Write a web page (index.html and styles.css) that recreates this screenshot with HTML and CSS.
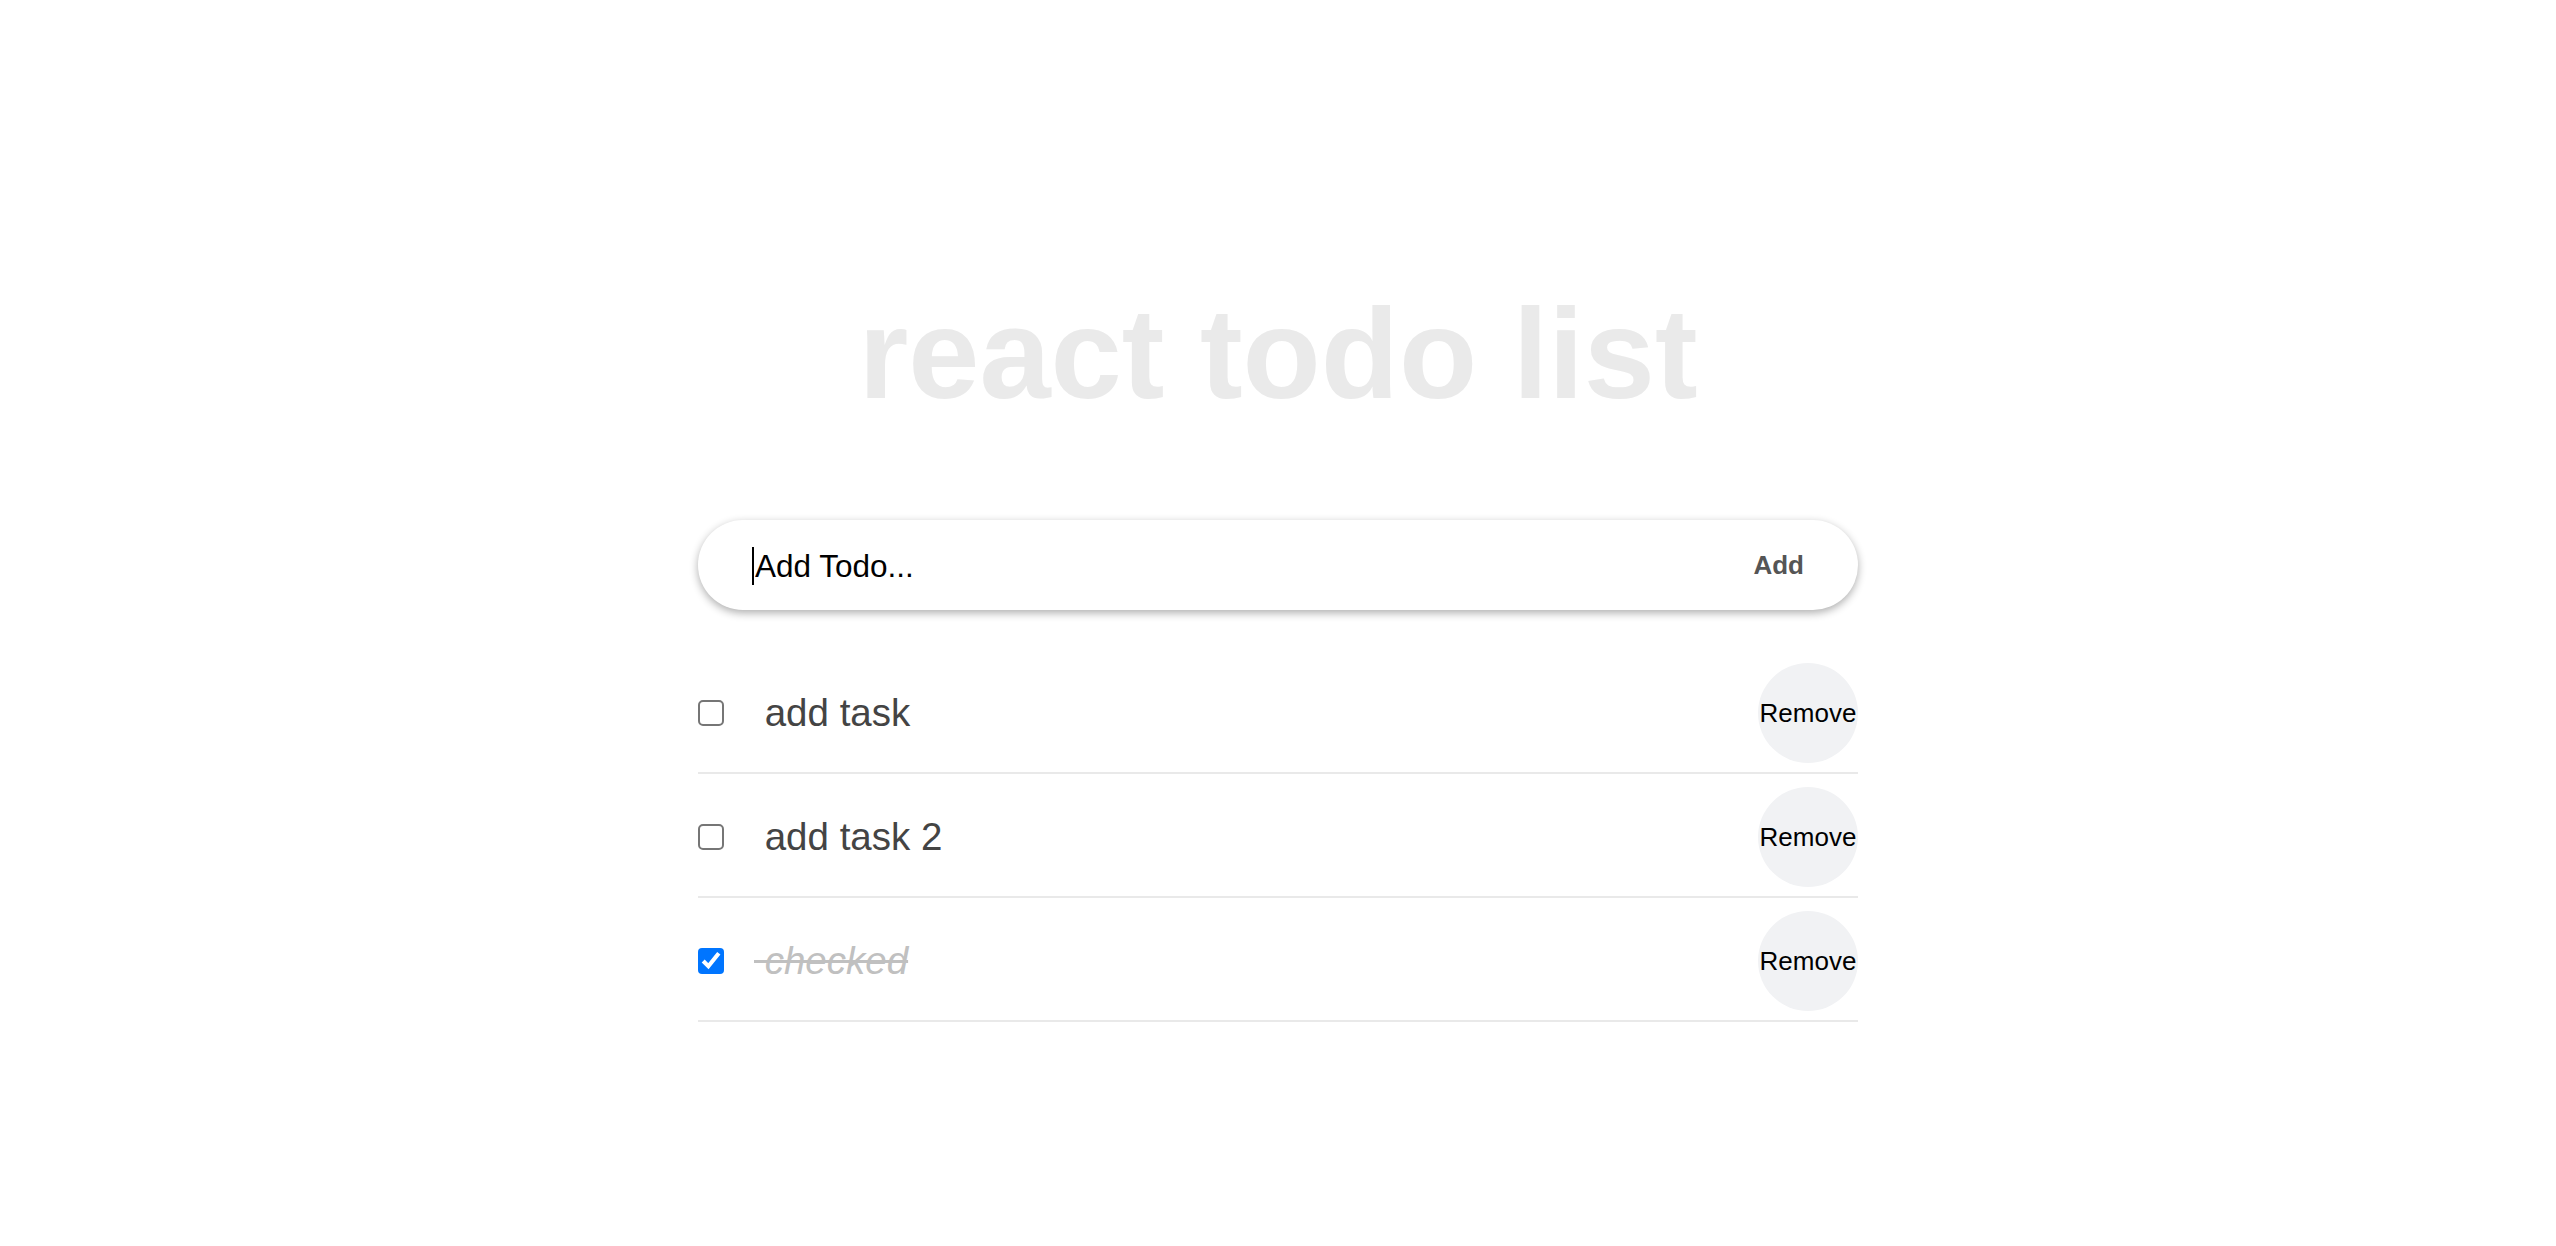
FILE: index.html
```html
<!DOCTYPE html>
<html lang="en">
<head>
<meta charset="utf-8">
<title>react todo list</title>
<link rel="stylesheet" href="styles.css">
</head>
<body>
<main class="app">
  <h1 class="title">react todo list</h1>
  <form class="add-form">
    <span class="caret"></span>
    <input class="add-input" type="text" placeholder="Add Todo...">
    <button class="add-btn" type="button">Add</button>
  </form>
  <ul class="todo-list">
    <li class="todo">
      <input class="todo-check" type="checkbox">
      <span class="todo-text">&nbsp;add task</span>
      <button class="remove-btn" type="button">Remove</button>
    </li>
    <li class="todo">
      <input class="todo-check" type="checkbox">
      <span class="todo-text">&nbsp;add task 2</span>
      <button class="remove-btn" type="button">Remove</button>
    </li>
    <li class="todo">
      <input class="todo-check" type="checkbox" checked>
      <span class="todo-text done">&nbsp;checked</span>
      <button class="remove-btn" type="button">Remove</button>
    </li>
  </ul>
</main>
</body>
</html>
```
FILE: styles.css
```css
* { box-sizing: border-box; }

html, body {
  margin: 0;
  padding: 0;
  background: #ffffff;
  font-family: "Liberation Sans", Arial, Helvetica, sans-serif;
}

.app {
  width: 1160px;
  margin: 0 auto;
  padding-top: 280px;
}

.title {
  margin: 0 0 93px;
  font-size: 128px;
  font-weight: 700;
  line-height: normal;
  text-align: center;
  color: #eaeaea;
}

.add-form {
  display: flex;
  align-items: center;
  height: 90px;
  border-radius: 45px;
  background: #ffffff;
  box-shadow: 0 3px 9px rgba(0, 0, 0, 0.32);
  padding: 0 54px 0 54px;
}

.caret {
  width: 2px;
  height: 38px;
  margin: 2px 1px 0 0;
  background: #000000;
  flex: none;
}

.add-input {
  flex: 1;
  min-width: 0;
  border: none;
  outline: none;
  background: transparent;
  padding: 2px 0 0;
  margin: 0;
  font-family: inherit;
  font-size: 31.5px;
  color: #000000;
}

.add-input::placeholder {
  color: #000000;
  opacity: 1;
}

.add-btn {
  border: none;
  background: transparent;
  padding: 0;
  margin: 0;
  font-family: inherit;
  font-size: 26px;
  font-weight: 700;
  color: #555555;
}

.todo-list {
  list-style: none;
  margin: 40px 0 0;
  padding: 0;
}

.todo {
  display: flex;
  align-items: center;
  padding: 13px 0 9px;
  border-bottom: 2px solid #e9e9e9;
}

.todo-check {
  zoom: 2;
  margin: 0;
}

.todo-text {
  flex: 1;
  margin-left: 30px;
  font-size: 38.5px;
  color: #444444;
}

.todo-text.done {
  color: #c0c0c0;
  font-style: italic;
  text-decoration: line-through;
}

.remove-btn {
  width: 100px;
  height: 100px;
  border: none;
  border-radius: 50%;
  padding: 0;
  margin: 0;
  background: #f1f2f4;
  font-family: inherit;
  font-size: 26px;
  color: #000000;
}
```
